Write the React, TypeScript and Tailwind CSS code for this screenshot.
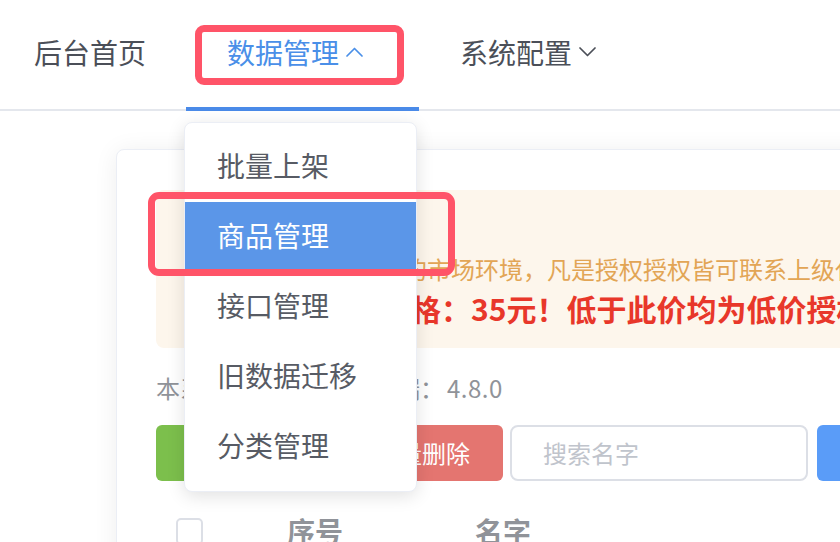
import React from "react";

type NavItem = {
  label: string;
  active?: boolean;
  arrow?: "up" | "down";
};

const navItems: NavItem[] = [
  { label: "后台首页" },
  { label: "数据管理", active: true, arrow: "up" },
  { label: "系统配置", arrow: "down" },
];

const menuItems = ["批量上架", "商品管理", "接口管理", "旧数据迁移", "分类管理"];

// Thin element-ui style chevron
const Chevron = ({ dir }: { dir: "up" | "down" }) => (
  <svg width="17" height="10" viewBox="0 0 17 10" fill="none" className="ml-[7px]">
    <polyline
      points={dir === "up" ? "1,9 8.5,1.5 16,9" : "1,1 8.5,8.5 16,1"}
      stroke="currentColor"
      strokeWidth="1.7"
      strokeLinecap="round"
      strokeLinejoin="round"
    />
  </svg>
);

const App = () => {
  return (
    <div className="relative w-[840px] h-[542px] overflow-hidden bg-white font-['Noto_Sans_CJK_SC',sans-serif]">
      {/* top menu */}
      <div className="flex h-[111px] border-b-2 border-[#e4e7ed]">
        {navItems.map((item, i) => (
          <div
            key={item.label}
            className={
              item.active
                ? "flex items-center pl-[41px] pr-[56px] pb-[4px] -mb-[2px] border-b-4 border-[#4a8ae8] text-[28px] text-[#4a8fe8]"
                : i === 0
                ? "flex items-center pl-[34px] pr-[40px] pb-[6px] text-[28px] text-[#4b4f58]"
                : "flex items-center pl-[41px] pr-[40px] pb-[6px] text-[28px] text-[#4b4f58]"
            }
          >
            <span>{item.label}</span>
            {item.arrow && <Chevron dir={item.arrow} />}
          </div>
        ))}
      </div>

      {/* page */}
      <div className="pl-[116px] pt-[38px]">
        <div className="w-[900px] rounded-[8px] border border-[#ebeef5] bg-white px-[39px] pt-[40px] pb-[40px] shadow-[0_2px_24px_rgba(0,0,0,0.07)]">
          <div className="h-[158px] overflow-hidden whitespace-nowrap rounded-[8px] bg-[#fdf6ec] pl-[31px] pt-[22px]">
            <div className="text-[26px] leading-[34px] font-bold text-[#e6a23c]">温馨提示</div>
            <div className="mt-[6px] text-[24px] leading-[34px] text-[#e2a555]">
              为维护各级代理良好的市场环境，凡是授权授权皆可联系上级代理进行处理。
            </div>
            <div className="pl-[14px] text-[30px] leading-[44px] font-bold text-[#e8372a]">
              平台最低授权价格：35元！低于此价均为低价授权，一经发现立即处理！
            </div>
          </div>

          <div className="mt-[23px] text-[24px] leading-[34px] text-[#909399]">
            本系统当前版本号，前端：<span className="ml-[3px] tracking-[0.5px]">4.8.0</span>
          </div>

          <div className="mt-[20px] flex h-[56px] text-[24px]">
            <button className="w-[175px] shrink-0 rounded-[6px] bg-[#7cbf4c] text-white">批量上传</button>
            <button className="ml-[10px] w-[162px] shrink-0 rounded-[6px] bg-[#e47570] text-white">批量删除</button>
            <div className="ml-[7px] flex w-[298px] shrink-0 items-center rounded-[8px] border-2 border-[#dcdfe6] pl-[31px] text-[#c0c4cc]">
              搜索名字
            </div>
            <button className="ml-[9px] w-[150px] shrink-0 rounded-[6px] bg-[#5a9cf8] text-white">搜索</button>
          </div>

          <div className="mt-[20px] flex h-[60px] items-center text-[28px] font-bold text-[#909399]">
            <div className="ml-[20px] h-[27px] w-[27px] shrink-0 rounded-[5px] border-2 border-[#dcdfe6]" />
            <div className="ml-[84px] w-[188px] shrink-0">序号</div>
            <div>名字</div>
          </div>
        </div>
      </div>

      {/* dropdown of 数据管理 */}
      <div className="absolute left-[184px] top-[122px] w-[233px] rounded-[8px] border border-[#ebeef5] bg-white py-[9px] shadow-[0_4px_18px_rgba(0,0,0,0.12)]">
        {menuItems.map((label) => (
          <div
            key={label}
            className={
              label === "商品管理"
                ? "flex h-[70px] items-center pl-[32px] pb-[4px] text-[28px] bg-[#5b96e8] text-white"
                : "flex h-[70px] items-center pl-[32px] pb-[4px] text-[28px] text-[#575b64]"
            }
          >
            {label}
          </div>
        ))}
      </div>

      {/* annotation boxes */}
      <div className="absolute left-[195px] top-[25px] h-[60px] w-[209px] rounded-[9px] border-[7px] border-[#ff5468]" />
      <div className="absolute left-[148px] top-[192px] h-[84px] w-[307px] rounded-[11px] border-[7px] border-[#ff5468]" />
    </div>
  );
};

export default App;
